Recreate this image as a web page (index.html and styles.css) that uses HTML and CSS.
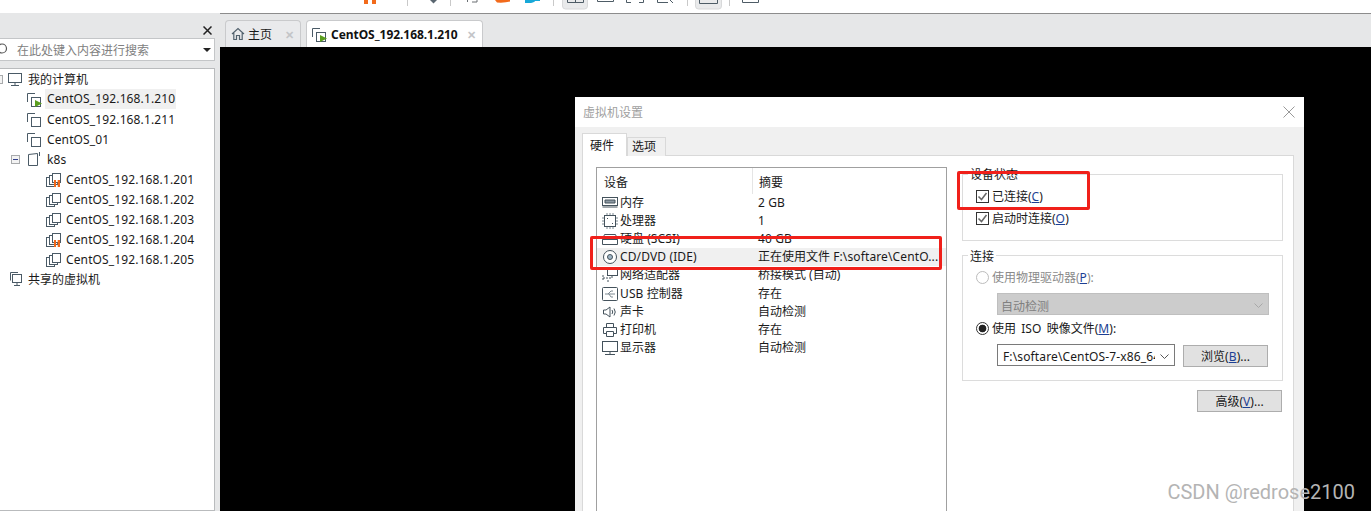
FILE: index.html
```html
<!DOCTYPE html>
<html lang="zh-CN">
<head>
<meta charset="UTF-8">
<title>虚拟机设置</title>
<link rel="stylesheet" href="styles.css">
</head>
<body>
<svg width="0" height="0" class="defs">
  <symbol id="vm" viewBox="0 0 16 16">
    <path d="M1.500 11V2.500H9" fill="none" stroke="#4a5a66"/>
    <rect x="5.500" y="6.500" width="9" height="9" fill="#fff" stroke="#4a5a66"/>
  </symbol>
  <symbol id="vm-small" viewBox="0 0 16 16">
    <rect x=".5" y="6.500" width="8" height="9" fill="#fff" stroke="#4a5a66"/>
    <rect x="3.500" y="4.500" width="8" height="9" fill="#fff" stroke="#4a5a66"/>
    <rect x="6.500" y="2.500" width="8" height="9" fill="#fff" stroke="#4a5a66"/>
  </symbol>
</svg>

<div class="toolbar">
  <svg width="1371" height="13" viewBox="0 0 1371 13">
    <g fill="#f26a1b"><rect x="364" width="4" height="4"/><rect x="372" width="4" height="4"/></g>
    <g fill="#c9c9c9">
      <rect x="407" width="1" height="6"/><rect x="450" width="1" height="6"/>
      <rect x="553" width="1" height="6"/><rect x="687" width="1" height="6"/><rect x="729" width="1" height="6"/>
    </g>
    <path d="M430 0H437L433.500 3.500Z" fill="#5a6670"/>
    <path d="M467.500 0V2M472 2H477V0" fill="none" stroke="#6a6f73"/>
    <path d="M495 0H510V1.500Q505 3 497 2.500Z" fill="#f26a1b"/>
    <path d="M525 3H531Q535 2 535 1H540V0H525Z" fill="#17a8d8"/>
    <rect x="562.500" y="-4" width="25" height="13" rx="3" fill="#e9eaeb" stroke="#d8d9da"/>
    <rect x="695.500" y="-4" width="26" height="13" rx="3" fill="#e9eaeb" stroke="#d8d9da"/>
    <g fill="none" stroke="#4e5c66">
      <path d="M567.500 0V2.500H583.500V0M575.500 0V2.500"/>
      <path d="M597.500 0V1.500H613.500V0"/>
      <path d="M626.500 0V2.500H631M639 2.500H643.500V0"/>
      <path d="M657.500 0V2.500H668M670 0L673 3"/>
      <path d="M699.500 0V3.500H717.500V0"/>
      <path d="M742.500 0V2.500H758.500V0"/>
    </g>
  </svg>
</div>

<div class="workspace">
  <aside class="sidebar">
    <div class="sidebar-head">
      <svg class="close-icon" width="9" height="9" viewBox="0 0 9 9"><path d="M.5.5L8.500 8.500M8.500.5L.5 8.500" stroke="#222" stroke-width="1.500"/></svg>
    </div>
    <div class="search">
      <svg class="search-icon" width="10" height="14" viewBox="0 0 10 14"><circle cx="2" cy="5.500" r="4.500" fill="none" stroke="#555" stroke-width="1.200"/></svg>
      <span class="search-text">在此处键入内容进行搜索</span>
      <span class="search-arrow"></span>
    </div>
    <div class="tree">
      <div class="node root">
        <span class="expander cut"></span>
        <svg class="ico" width="16" height="16" viewBox="0 0 16 16"><rect x=".5" y="2.500" width="13" height="9" fill="none" stroke="#4a5a66"/><path d="M7 11.500V14M3 14.500H11" fill="none" stroke="#4a5a66"/></svg>
        <span>我的计算机</span>
      </div>
      <div class="node vm selected">
        <svg class="ico" width="16" height="16"><use href="#vm"/><path d="M9 9V16L16 12.500Z" fill="#5a9e1e"/></svg>
        <span class="en">CentOS_192.168.1.210</span>
      </div>
      <div class="node vm">
        <svg class="ico" width="16" height="16"><use href="#vm"/></svg>
        <span class="en">CentOS_192.168.1.211</span>
      </div>
      <div class="node vm">
        <svg class="ico" width="16" height="16"><use href="#vm"/></svg>
        <span class="en">CentOS_01</span>
      </div>
      <div class="node folder">
        <span class="expander"></span>
        <svg class="ico" width="16" height="16" viewBox="0 0 16 16"><path d="M1.500 3.500L10.500 2.500V14.500H1.500ZM12.500 1V5" fill="#fff" stroke="#4a5a66"/></svg>
        <span class="en">k8s</span>
      </div>
      <div class="node child">
        <svg class="ico" width="16" height="16"><use href="#vm-small"/><path d="M8 9H10V16H8ZM11.700 9H14V16H11.700Z" fill="#f26a1b"/></svg>
        <span class="en">CentOS_192.168.1.201</span>
      </div>
      <div class="node child">
        <svg class="ico" width="16" height="16"><use href="#vm-small"/></svg>
        <span class="en">CentOS_192.168.1.202</span>
      </div>
      <div class="node child">
        <svg class="ico" width="16" height="16"><use href="#vm-small"/></svg>
        <span class="en">CentOS_192.168.1.203</span>
      </div>
      <div class="node child">
        <svg class="ico" width="16" height="16"><use href="#vm-small"/><path d="M8 9H10V16H8ZM11.700 9H14V16H11.700Z" fill="#f26a1b"/></svg>
        <span class="en">CentOS_192.168.1.204</span>
      </div>
      <div class="node child">
        <svg class="ico" width="16" height="16"><use href="#vm-small"/></svg>
        <span class="en">CentOS_192.168.1.205</span>
      </div>
      <div class="node root">
        <svg class="ico" width="16" height="16" viewBox="0 0 16 16"><path d="M2.500 9.500V1.500H10" fill="none" stroke="#4a5a66"/><rect x="4.500" y="3.500" width="9" height="8" fill="#fff" stroke="#4a5a66"/><path d="M9 11.500V14M6 14.500H12" fill="none" stroke="#4a5a66"/></svg>
        <span>共享的虚拟机</span>
      </div>
    </div>
  </aside>

  <main class="main">
    <div class="tabs">
      <div class="tab">
        <svg width="14" height="14" viewBox="0 0 14 14"><path d="M1 7L7 1.500L13 7M2.800 6V12.500H5.500V8.500H8.500V12.500H11.200V6" fill="none" stroke="#52626e" stroke-width="1.200"/></svg>
        <span class="tab-label">主页</span>
        <span class="tab-close">✕</span>
      </div>
      <div class="tab active">
        <svg width="16" height="16"><use href="#vm"/><path d="M9 9V16L16 12.500Z" fill="#5a9e1e"/></svg>
        <span class="tab-label">CentOS_192.168.1.210</span>
        <span class="tab-close">✕</span>
      </div>
    </div>
    <div class="console">
      <section class="dialog">
        <header class="dialog-title">
          <span>虚拟机设置</span>
          <svg width="12" height="12" viewBox="0 0 12 12"><path d="M.5.5L11.500 11.500M11.500.5L.5 11.500" stroke="#999"/></svg>
        </header>
        <div class="dialog-body">
          <div class="dialog-tabs">
            <div class="dialog-tab on">硬件</div>
            <div class="dialog-tab">选项</div>
          </div>
          <div class="dialog-panel">
            <div class="devices">
              <div class="devices-head">
                <span class="col-a">设备</span>
                <span class="col-b">摘要</span>
              </div>
              <div class="device">
                <span class="col-a">
                  <svg width="16" height="14" viewBox="0 0 16 14"><rect x=".5" y="1.500" width="15" height="8" fill="none" stroke="#44525c"/><path d="M3 4H13V7H3ZM.5 11H15.500" fill="#8d99a3" stroke="#44525c"/></svg>
                  <span>内存</span>
                </span>
                <span class="col-b en">2 GB</span>
              </div>
              <div class="device">
                <span class="col-a">
                  <svg width="16" height="16" viewBox="0 0 16 16"><rect x="2.500" y="2.500" width="11" height="11" fill="#fff" stroke="#44525c"/><path d="M5 0V2M8 0V2M11 0V2M5 14V16M8 14V16M11 14V16M0 5H2M0 8H2M0 11H2M14 5H16M14 8H16M14 11H16" stroke="#7c8992"/><path d="M5 5H6V6H5ZM10 10H11V11H10Z" fill="#44525c"/></svg>
                  <span>处理器</span>
                </span>
                <span class="col-b en">1</span>
              </div>
              <div class="device">
                <span class="col-a">
                  <svg width="16" height="14" viewBox="0 0 16 14"><path d="M2.500 2.500H13.500L15.500 7.500V12.500H.5V7.500ZM.5 7.500H15.500" fill="none" stroke="#44525c"/></svg>
                  <span>硬盘 <span class="en">(SCSI)</span></span>
                </span>
                <span class="col-b en">40 GB</span>
              </div>
              <div class="device current">
                <span class="col-a">
                  <svg width="16" height="16" viewBox="0 0 16 16"><circle cx="8" cy="8" r="6.500" fill="#fff" stroke="#44525c"/><circle cx="8" cy="8" r="2.500" fill="#9fb6c6" stroke="#44525c"/></svg>
                  <span class="en">CD/DVD (IDE)</span>
                </span>
                <span class="col-b">正在使用文件 <span class="en">F:\softare\CentO...</span></span>
              </div>
              <div class="device">
                <span class="col-a">
                  <svg width="16" height="14" viewBox="0 0 16 14"><rect x="5.500" y=".5" width="10" height="7" fill="#fff" stroke="#44525c"/><path d="M10 8V10H1M1 7V13M5 13H7" fill="none" stroke="#44525c" stroke-dasharray="2 1"/></svg>
                  <span>网络适配器</span>
                </span>
                <span class="col-b">桥接模式 (自动)</span>
              </div>
              <div class="device">
                <span class="col-a">
                  <svg width="16" height="14" viewBox="0 0 16 14"><rect x=".5" y=".5" width="15" height="13" rx="1" fill="#fff" stroke="#44525c"/><path d="M3 7H13M6 7L9 4H11M7 7L9 10H11" fill="none" stroke="#7c8992"/></svg>
                  <span><span class="en">USB</span> 控制器</span>
                </span>
                <span class="col-b">存在</span>
              </div>
              <div class="device">
                <span class="col-a">
                  <svg width="16" height="14" viewBox="0 0 16 14"><path d="M1.500 5H4L8 2V12L4 9H1.500ZM10 5Q11.500 7 10 9M12 3.500Q14.500 7 12 10.500" fill="none" stroke="#44525c"/></svg>
                  <span>声卡</span>
                </span>
                <span class="col-b">自动检测</span>
              </div>
              <div class="device">
                <span class="col-a">
                  <svg width="16" height="14" viewBox="0 0 16 14"><path d="M4.500 4V.5H11.500V4M4 10.500H1.500V4.500H14.500V10.500H12M4.500 8.500H11.500V13.500H4.500Z" fill="none" stroke="#44525c"/></svg>
                  <span>打印机</span>
                </span>
                <span class="col-b">存在</span>
              </div>
              <div class="device">
                <span class="col-a">
                  <svg width="16" height="14" viewBox="0 0 16 14"><rect x=".5" y=".5" width="15" height="10" fill="#fff" stroke="#44525c"/><path d="M8 11V13M3 13.500H13" fill="none" stroke="#44525c"/></svg>
                  <span>显示器</span>
                </span>
                <span class="col-b">自动检测</span>
              </div>
            </div>

            <div class="options">
              <fieldset class="group status">
                <legend>设备状态</legend>
                <label class="check-row">
                  <span class="check"><svg width="11" height="11" viewBox="0 0 11 11"><path d="M1.500 5.500L4.500 8.500L9.500 2" fill="none" stroke="#666" stroke-width="1.500"/></svg></span>
                  <span>已连接(<u class="en">C</u>)</span>
                </label>
                <label class="check-row">
                  <span class="check"><svg width="11" height="11" viewBox="0 0 11 11"><path d="M1.500 5.500L4.500 8.500L9.500 2" fill="none" stroke="#666" stroke-width="1.500"/></svg></span>
                  <span>启动时连接(<u class="en">O</u>)</span>
                </label>
              </fieldset>

              <fieldset class="group link">
                <legend>连接</legend>
                <label class="radio-row off"><span class="radio"></span><span>使用物理驱动器(<u class="en">P</u>):</span></label>
                <div class="combo disabled">
                  <span>自动检测</span>
                  <svg width="9" height="5" viewBox="0 0 9 5"><path d="M.5.5L4.500 4.500L8.500.5" fill="none" stroke="#a8a8a8"/></svg>
                </div>
                <label class="radio-row"><span class="radio checked"></span><span>使用 <span class="en iso">ISO</span> 映像文件(<u class="en">M</u>):</span></label>
                <div class="file-row">
                  <div class="combo file">
                    <span class="en file-path">F:\softare\CentOS-7-x86_64</span>
                    <svg width="9" height="5" viewBox="0 0 9 5"><path d="M.5.5L4.500 4.500L8.500.5" fill="none" stroke="#555"/></svg>
                  </div>
                  <button class="btn">浏览(<u class="en">B</u>)...</button>
                </div>
              </fieldset>

              <div class="advanced">
                <button class="btn">高级(<u class="en">V</u>)...</button>
              </div>
            </div>
          </div>
        </div>
      </section>
    </div>
  </main>
</div>

<div class="mark mark-cd"></div>
<div class="mark mark-status"></div>
<div class="watermark">CSDN @redrose2100</div>
</body>
</html>
```

FILE: styles.css
```css
* {
    box-sizing: border-box;
}
html, body {
    margin: 0;
    height: 511px;
    overflow: hidden;
}
body {
    position: relative;
    background: #fff;
    color: #1a1a1a;
    font-family: "Noto Sans", "Noto Sans CJK SC", sans-serif;
    font-size: 12px;
}
.defs {
    position: absolute;
}
.en {
    letter-spacing: .13px;
}
u.en {
    color: #1c3f94;
}

/* top toolbar, only its bottom edge is in the picture */
.toolbar {
    height: 13px;
    overflow: hidden;
}
.toolbar svg {
    display: block;
}
.workspace {
    display: flex;
    height: 498px;
}

/* left library panel */
.sidebar {
    width: 220px;
    flex: none;
    background: #e6e7e8;
    padding-right: 4px;
    overflow: hidden;
}
.sidebar-head {
    height: 25px;
    display: flex;
    justify-content: flex-end;
    align-items: flex-end;
    padding: 0 4px 3px 0;
}
.search {
    height: 23px;
    margin-right: 1px;
    background: #fff;
    border: 1px solid #c4c6c8;
    border-left: 0;
    display: flex;
    align-items: center;
    color: #808080;
}
.search-icon {
    flex: none;
    overflow: visible;
}
.search-text {
    margin-left: 7px;
    flex: 1;
}
.search-arrow {
    width: 0;
    height: 0;
    margin-right: 3px;
    border: 4px solid transparent;
    border-top: 4px solid #222;
    border-bottom: 0;
}
.tree {
    height: 443px;
    margin-top: 7px;
    margin-right: 1px;
    background: #fff;
    border: 1px solid #b9bbbd;
    border-left: 0;
}
.node {
    height: 20px;
    display: flex;
    align-items: center;
    white-space: nowrap;
}
.node .ico {
    flex: none;
    margin-right: 4px;
}
.root {
    padding-left: 8px;
}
.vm {
    padding-left: 26px;
}
.vm .ico {
    margin-right: 5px;
}
.folder {
    padding-left: 11px;
}
.child {
    padding-left: 46px;
}
.selected span {
    background: #f0f0f0;
    height: 20px;
    line-height: 20px;
    width: 131px;
    padding-left: 2px;
    margin-left: -2px;
}
.expander {
    width: 9px;
    height: 9px;
    margin-right: 7px;
    background: linear-gradient(#33408c, #33408c) center / 5px 1px no-repeat #f3f3f3;
    border: 1px solid #a8aaac;
    flex: none;
}
.expander.cut {
    width: 3px;
    margin-left: -8px;
    margin-right: 5px;
    border-left: 0;
    background: #f3f3f3;
}

/* main tab strip */
.main {
    flex: 1;
    min-width: 0;
    display: flex;
    flex-direction: column;
}
.tabs {
    height: 34px;
    flex: none;
    background: #e6e7e8;
    border-top: 1px solid #8c8c8c;
    padding: 6px 0 0 5px;
    display: flex;
    gap: 5px;
}
.tab {
    width: 76px;
    height: 27px;
    border: 1px solid #c9cacc;
    border-bottom: 0;
    border-radius: 4px 4px 0 0;
    background: #e9eaec;
    display: flex;
    align-items: center;
    padding-left: 5px;
}
.tab-label {
    margin-left: 3px;
    flex: 1;
    white-space: nowrap;
}
.tab-close {
    color: #c3c5c8;
    font-size: 11px;
    font-weight: bold;
    margin-right: 6px;
}
.tab.active {
    width: 177px;
    background: #fff;
    padding-left: 4px;
}
.tab.active .tab-label {
    margin-left: 4px;
    font-weight: bold;
    letter-spacing: -.05px;
    color: #111;
}
.console {
    flex: 1;
    position: relative;
    background: #000;
    overflow: hidden;
}

/* settings dialog, a window floating over the console */
.dialog {
    position: absolute;
    left: 355px;
    top: 50px;
    width: 729px;
    height: 420px;
    background: #f0f0f0;
}
.dialog-title {
    height: 30px;
    background: #fff;
    color: #a0a0a0;
    display: flex;
    align-items: center;
    justify-content: space-between;
    padding: 0 9px 0 8px;
}
.dialog-body {
    padding: 7px 10px 0 7px;
}
.dialog-tabs {
    display: flex;
    align-items: flex-end;
    height: 22px;
    position: relative;
    margin-bottom: -1px;
}
.dialog-tab {
    width: 39px;
    height: 19px;
    border: 1px solid #d9d9d9;
    border-bottom: 0;
    background: #f0f0f0;
    line-height: 18px;
    padding-left: 4px;
}
.dialog-tab.on {
    width: 45px;
    height: 23px;
    background: #fff;
    position: relative;
    z-index: 1;
    line-height: 24px;
    padding-left: 7px;
}
.dialog-panel {
    height: 380px;
    background: #fff;
    border: 1px solid #d9d9d9;
    padding: 11px 11px 0 13px;
    display: flex;
    gap: 15px;
}
.devices {
    width: 351px;
    height: 370px;
    flex: none;
    border: 1px solid #a0a0a0;
}
.devices-head {
    height: 26px;
    display: flex;
    line-height: 30px;
}
.devices-head .col-a {
    display: block;
    padding-left: 7px;
}
.col-a {
    width: 155px;
    padding-left: 5px;
    display: flex;
    align-items: center;
    gap: 2px;
    white-space: nowrap;
}
.col-b {
    padding-left: 6px;
    white-space: nowrap;
}
.devices-head .col-b {
    border-left: 1px solid #e5e5e5;
}
.device {
    height: 18.100px;
    display: flex;
    align-items: center;
    line-height: 20px;
}
.device.current {
    background: #f0f0f0;
}
.device .col-a svg {
    flex: none;
}

/* right column */
.options {
    width: 321px;
    flex: none;
}
.group {
    margin: 0;
    padding: 0 0 0 13px;
    border: 1px solid #dcdcdc;
}
.group legend {
    padding: 0 2px;
    margin-left: -8px;
    line-height: 14px;
    height: 12px;
}
.link legend {
    line-height: 16px;
}
.status {
    height: 73px;
    margin-top: 1px;
    padding-top: 5px;
}
.check-row {
    display: flex;
    align-items: center;
    height: 22px;
}
.check {
    width: 13px;
    height: 13px;
    border: 1px solid #333;
    margin-right: 3px;
    display: flex;
    align-items: center;
    justify-content: center;
}
.link {
    height: 132px;
    margin-top: 8px;
    padding-top: 5px;
}
.radio-row {
    display: flex;
    align-items: center;
    height: 22px;
}
.radio-row.off {
    color: #8a8a8a;
}
.radio {
    width: 13px;
    height: 13px;
    border: 1px solid #333;
    border-radius: 50%;
    margin-right: 3px;
    background: #fff;
}
.radio-row.off .radio {
    border-color: #bcbcbc;
}
.radio.checked {
    background: radial-gradient(circle, #222 3.500px, #fff 4.200px);
}
.iso {
    margin: 0 2px;
}
.combo {
    margin-left: 21px;
    width: 272px;
    height: 22px;
    display: flex;
    align-items: center;
    justify-content: space-between;
    padding: 2px 5px 0;
    white-space: nowrap;
}
.combo.disabled {
    background: #cccccc;
    border: 1px solid #bfbfbf;
    color: #808080;
    margin-top: 5px;
    margin-bottom: 2px;
    padding: 3px 5px 0 3px;
}
.combo.file {
    width: 178px;
    border: 1px solid #7a7a7a;
    margin-left: 0;
}
.file-path {
    width: 152px;
    overflow: hidden;
}
.file-row {
    display: flex;
    gap: 8px;
    margin: 5px 0 0 21px;
}
.file-row .btn {
    margin-top: 1px;
}
.btn {
    width: 85px;
    height: 22px;
    padding: 0;
    background: #e1e1e1;
    border: 1px solid #adadad;
    color: #1a1a1a;
    font: inherit;
}
.advanced {
    display: flex;
    justify-content: flex-end;
    margin: 9px 1px 0 0;
}

/* red marks drawn on the screenshot */
.mark {
    position: absolute;
    border: 3px solid #f0201a;
    border-radius: 2px;
}
.mark-cd {
    left: 590px;
    top: 236px;
    width: 352px;
    height: 34px;
}
.mark-status {
    left: 957px;
    top: 171px;
    width: 133px;
    height: 39px;
}
.watermark {
    position: absolute;
    right: 16px;
    bottom: 7px;
    color: #b4b4b4;
    font-family: "Roboto", sans-serif;
    font-size: 20px;
    line-height: 24px;
}
```
